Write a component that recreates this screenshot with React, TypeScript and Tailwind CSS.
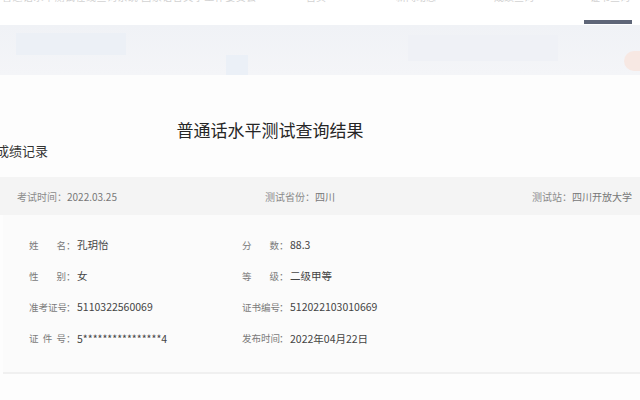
import React from "react";

const font = { fontFamily: '"Noto Sans CJK SC", "Noto Sans", sans-serif' };

const rows: [string[], string, string[], string][] = [
  [["姓", "名"], "孔玥怡", ["分", "数"], "88.3"],
  [["性", "别"], "女", ["等", "级"], "二级甲等"],
  [["准", "考", "证", "号"], "5110322560069", ["证", "书", "编", "号"], "512022103010669"],
  [["证", "件", "号"], "5****************4", ["发", "布", "时", "间"], "2022年04月22日"],
];

function Label({ chars }: { chars: string[] }) {
  return (
    <div className="flex w-[48px] shrink-0 items-center text-[9.5px] text-[#7a7a7a]">
      <div className="flex w-[37px] justify-between">
        {chars.map((c, i) => (
          <span key={i}>{c}</span>
        ))}
      </div>
      <span>：</span>
    </div>
  );
}

export default function App() {
  return (
    <div className="relative h-[400px] w-[640px] overflow-hidden bg-[#fdfdfd]" style={font}>
      {/* top nav, text cut by the crop */}
      <div className="relative h-[25px] overflow-hidden bg-white">
        <div className="-mt-[12px] flex h-[16px] items-center text-[10px] text-[#d2d2d2]">
          <span className="ml-[2px] w-[304px] tracking-[0.5px]">普通话水平测试在线查询系统 国家语言文字工作委员会</span>
          <span className="w-[90px]">首页</span>
          <span className="w-[98px]">新闻动态</span>
          <span className="w-[96px]">成绩查询</span>
          <span>证书查询</span>
        </div>
        <div className="absolute left-[584px] top-[20px] h-[4px] w-[48px] bg-[#5f6678]" />
      </div>

      {/* banner strip */}
      <div className="flex h-[50px] items-stretch bg-gradient-to-b from-[#f0f2f6] to-[#f4f5f8]">
        <div className="mt-[8px] ml-[16px] h-[22px] w-[110px] bg-[#ecf0f6]" />
        <div className="ml-[100px] mt-[30px] h-[20px] w-[22px] bg-[#ebf0f7]" />
        <div className="ml-[160px] mt-[10px] h-[26px] w-[150px] bg-[#eff1f6]" />
        <div className="ml-auto mr-0 mt-[26px] h-[20px] w-[16px] rounded-l-full bg-[#f7e8e3]" />
      </div>

      {/* heading */}
      <div className="flex w-[540px] justify-center pt-[43px] text-[17px] leading-[24px] text-[#262626]">
        普通话水平测试查询结果
      </div>
      <div className="-ml-[4px] mt-[-1px] text-[13px] leading-[20px] text-[#333]">成绩记录</div>

      {/* exam row */}
      <div className="mt-[16px] flex h-[38px] items-center bg-[#f4f4f4] pl-[17px] pr-[8px] text-[10px] text-[#8a8a8a]">
        <span className="w-[248px]">
          考试时间：<span className="text-[#777]">2022.03.25</span>
        </span>
        <span>
          测试省份：<span className="text-[#777]">四川</span>
        </span>
        <span className="ml-auto">
          测试站：<span className="text-[#777]">四川开放大学</span>
        </span>
      </div>

      {/* detail panel */}
      <div className="ml-[3px] h-[159px] border-b-2 border-[#f0f0f0] bg-[#fbfbfb] pt-[14px] text-[10.5px]">
        {rows.map(([l1, v1, l2, v2], i) => (
          <div key={i} className="grid h-[31.3px] grid-cols-[213px_1fr] items-center pl-[26px]">
            <div className="flex items-center">
              <Label chars={l1} />
              <span className="text-[#444]">{v1}</span>
            </div>
            <div className="flex items-center">
              <Label chars={l2} />
              <span className="text-[#444]">{v2}</span>
            </div>
          </div>
        ))}
      </div>
    </div>
  );
}
